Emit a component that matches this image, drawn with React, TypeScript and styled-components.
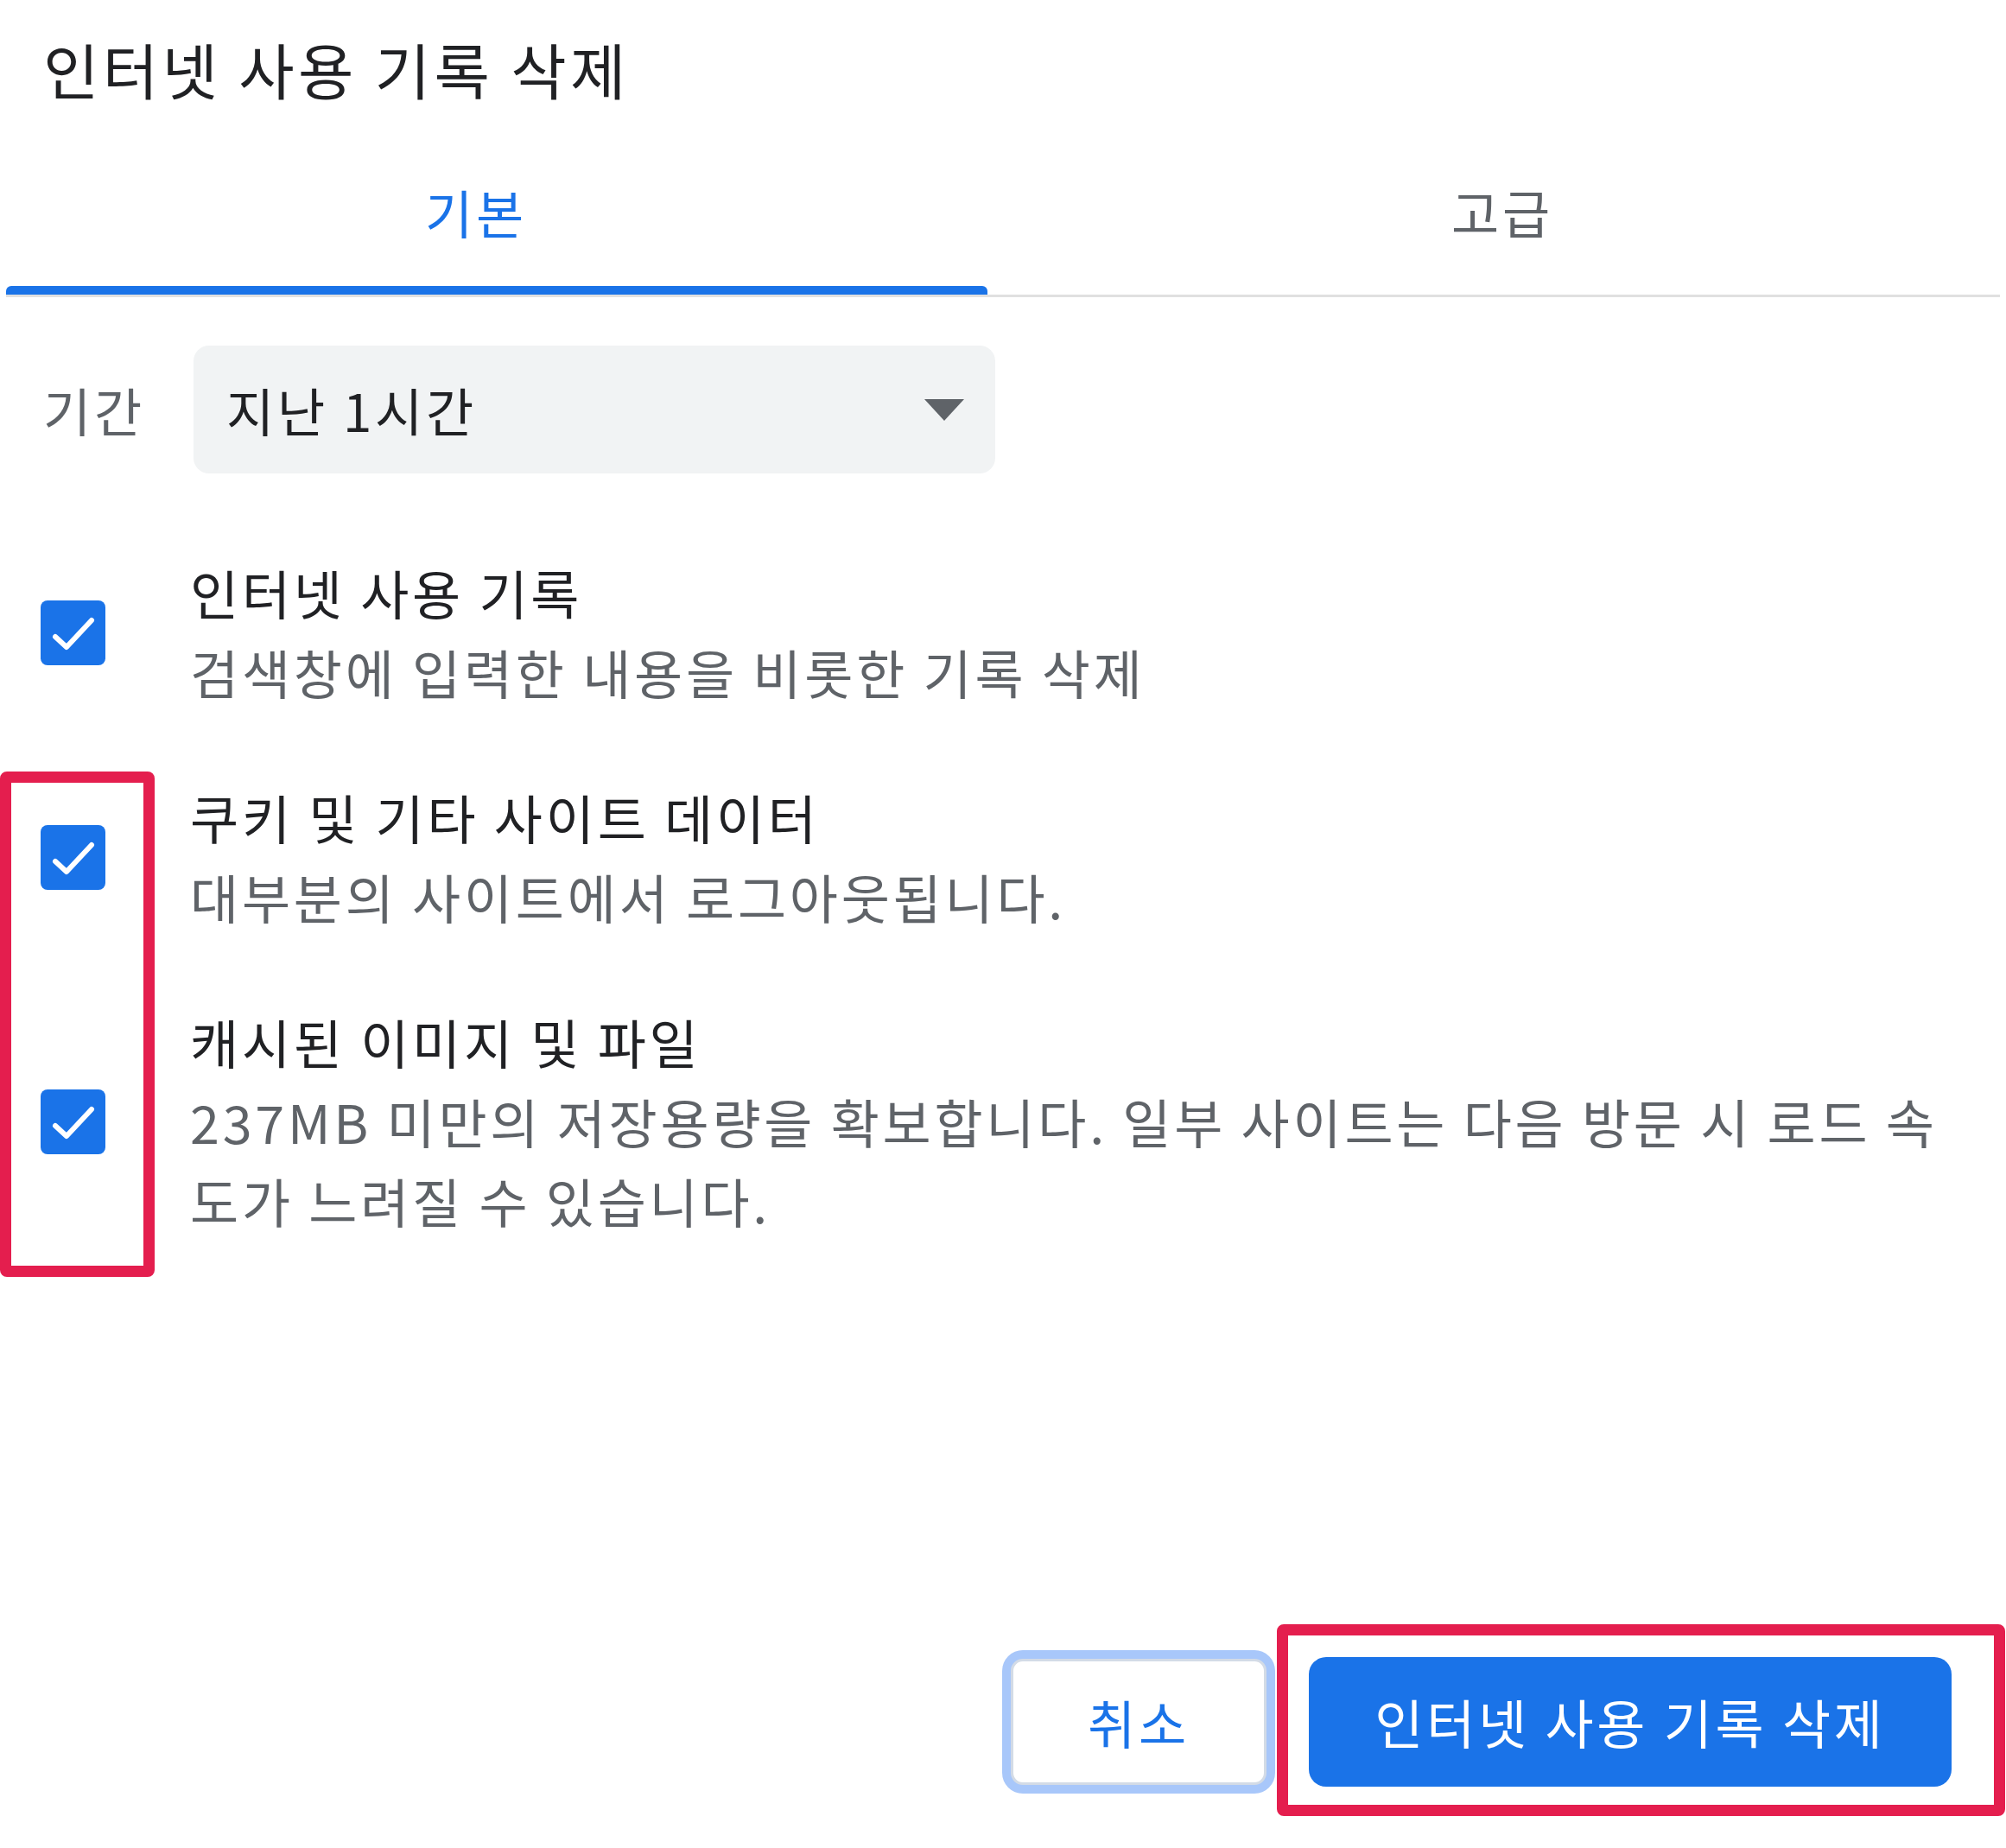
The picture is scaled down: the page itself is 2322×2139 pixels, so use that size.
import React from "react";
import styled, { createGlobalStyle } from "styled-components";

const GlobalStyle = createGlobalStyle`
  html, body {
    margin: 0;
    padding: 0;
    background: #ffffff;
  }
  body {
    font-family: "Noto Sans CJK KR", "Noto Sans", sans-serif;
    color: #202124;
  }
  * {
    box-sizing: border-box;
    letter-spacing: 0.062em;
  }
`;

const Dialog = styled.div`
  position: relative;
  width: 2322px;
  height: 2139px;
  display: flex;
  flex-direction: column;
  background: #ffffff;
`;

const Title = styled.h1`
  margin: 0;
  padding: 38px 0 0 50px;
  font-size: 70px;
  line-height: 84px;
  font-weight: 400;
  color: #202124;
`;

const TabList = styled.div`
  display: flex;
  margin: 0 7px;
  border-bottom: 3px solid #e0e0e0;
`;

const Tab = styled.div<{ $active?: boolean; $grow?: boolean; $padL?: number; $padR?: number }>`
  position: relative;
  ${(p) => (p.$grow ? "flex: 1;" : "width: 1136px;")}
  padding: 87px ${(p) => p.$padR ?? 0}px 60px ${(p) => p.$padL ?? 0}px;
  text-align: center;
  font-size: 60px;
  line-height: 72px;
  color: ${(p) => (p.$active ? "#1a73e8" : "#5f6368")};
  &::after {
    content: "";
    position: absolute;
    left: 0;
    right: 0;
    bottom: 0;
    height: 10px;
    border-radius: 6px 6px 0 0;
    background: ${(p) => (p.$active ? "#1a73e8" : "transparent")};
  }
`;

const PeriodRow = styled.div`
  display: flex;
  align-items: center;
  margin-top: 56px;
  padding-left: 50px;
`;

const PeriodLabel = styled.span`
  width: 174px;
  font-size: 60px;
  line-height: 72px;
  color: #5f6368;
`;

const Select = styled.div`
  width: 928px;
  height: 148px;
  display: flex;
  align-items: center;
  justify-content: space-between;
  padding: 0 36px 0 38px;
  background: #f1f3f4;
  border-radius: 18px;
  font-size: 60px;
  line-height: 72px;
  color: #202124;
`;

const ItemList = styled.div`
  display: flex;
  flex-direction: column;
  gap: 76px;
  margin-top: 92px;
  padding-left: 47px;
`;

const Item = styled.div`
  display: flex;
  align-items: center;
  gap: 98px;
`;

const CheckBox = styled.div`
  flex: none;
  width: 75px;
  height: 75px;
  border-radius: 8px;
  background: #1a73e8;
  display: flex;
  align-items: center;
  justify-content: center;
`;

const ItemText = styled.div`
  width: 2060px;
  font-size: 61px;
  line-height: 92px;
`;

const ItemTitle = styled.div`
  color: #202124;
`;

const ItemDesc = styled.div`
  color: #5f6368;
`;

const ButtonRow = styled.div`
  margin-top: auto;
  display: flex;
  justify-content: flex-end;
  align-items: center;
  gap: 49px;
  padding: 0 63px 71px 0;
`;

const CancelButton = styled.button`
  width: 296px;
  height: 146px;
  border: 3px solid #d3dbe6;
  border-radius: 14px;
  box-shadow: 0 0 0 10px #a8c7fa;
  background: #ffffff;
  color: #1a73e8;
  font-family: inherit;
  font-size: 60px;
  line-height: 72px;
  padding: 0;
`;

const PrimaryButton = styled.button`
  width: 744px;
  height: 150px;
  border: none;
  border-radius: 20px;
  background: #1a73e8;
  color: #ffffff;
  font-family: inherit;
  font-size: 61px;
  line-height: 72px;
  padding: 0;
`;

const Highlight = styled.div<{ $left: number; $top: number; $w: number; $h: number }>`
  position: absolute;
  left: ${(p) => p.$left}px;
  top: ${(p) => p.$top}px;
  width: ${(p) => p.$w}px;
  height: ${(p) => p.$h}px;
  border: 13px solid #e41e4e;
  border-radius: 8px;
  pointer-events: none;
`;

const Check = () => (
  <svg width="75" height="75" viewBox="0 0 75 75" aria-hidden="true">
    <path
      d="M17 42 L30 54 L59 23"
      fill="none"
      stroke="#ffffff"
      strokeWidth="6"
      strokeLinecap="round"
      strokeLinejoin="round"
    />
  </svg>
);

const Caret = () => (
  <svg width="46" height="25" viewBox="0 0 46 25" aria-hidden="true">
    <path d="M0 0 H46 L23 25 Z" fill="#5f6368" />
  </svg>
);

const items = [
  {
    title: "인터넷 사용 기록",
    desc: "검색창에 입력한 내용을 비롯한 기록 삭제",
  },
  {
    title: "쿠키 및 기타 사이트 데이터",
    desc: "대부분의 사이트에서 로그아웃됩니다.",
  },
  {
    title: "캐시된 이미지 및 파일",
    desc: "237MB 미만의 저장용량을 확보합니다. 일부 사이트는 다음 방문 시 로드 속도가 느려질 수 있습니다.",
  },
];

export default function App() {
  return (
    <>
      <GlobalStyle />
      <Dialog>
        <Title>인터넷 사용 기록 삭제</Title>
        <TabList>
          <Tab $active $padR={48}>기본</Tab>
          <Tab $grow $padL={20}>고급</Tab>
        </TabList>
        <PeriodRow>
          <PeriodLabel>기간</PeriodLabel>
          <Select>
            <span>지난 1시간</span>
            <Caret />
          </Select>
        </PeriodRow>
        <ItemList>
          {items.map((it) => (
            <Item key={it.title}>
              <CheckBox>
                <Check />
              </CheckBox>
              <ItemText>
                <ItemTitle>{it.title}</ItemTitle>
                <ItemDesc>{it.desc}</ItemDesc>
              </ItemText>
            </Item>
          ))}
        </ItemList>
        <ButtonRow>
          <CancelButton>취소</CancelButton>
          <PrimaryButton>인터넷 사용 기록 삭제</PrimaryButton>
        </ButtonRow>
        <Highlight $left={0} $top={893} $w={179} $h={585} />
        <Highlight $left={1478} $top={1880} $w={843} $h={222} />
      </Dialog>
    </>
  );
}
